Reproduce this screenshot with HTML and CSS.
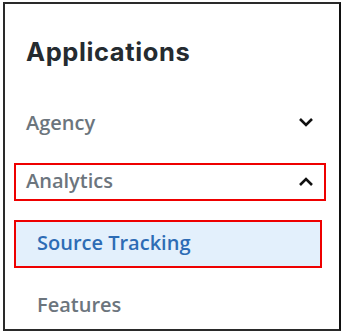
FILE: index.html
```html
<!DOCTYPE html>
<html>
<head>
<meta charset="utf-8">
<link rel="stylesheet" href="styles.css">
</head>
<body>
<div class="panel">
  <h1 class="title">Applications</h1>
  <div class="item">
    <span class="label">Agency</span>
    <svg class="chev" viewBox="0 0 16 10" width="16" height="10"><path d="M2 2 L8 8 L14 2" /></svg>
  </div>
  <div class="item item-open outlined">
    <span class="label">Analytics</span>
    <svg class="chev" viewBox="0 0 16 10" width="16" height="10"><path d="M2 8 L8 2 L14 8" /></svg>
  </div>
  <div class="sub sub-active outlined">
    <span class="label">Source Tracking</span>
  </div>
  <div class="sub">
    <span class="label">Features</span>
  </div>
</div>
</body>
</html>
```

FILE: styles.css
```css
html, body {
  margin: 0;
  padding: 0;
  background: #ffffff;
}
.panel {
  box-sizing: border-box;
  width: 338px;
  height: 329px;
  margin: 2px 0 0 3px;
  border: 2px solid #2a2a2a;
  border-right-color: #111;
  padding: 33px 13px 0 9px;
  overflow: hidden;
  font-family: "Open Sans", "Noto Sans", sans-serif;
}
.title {
  margin: 0 0 36px 0;
  padding-left: 12px;
  font-family: Inter, "Open Sans", sans-serif;
  font-weight: 700;
  font-size: 25.5px;
  line-height: 30px;
  color: #252b30;
  letter-spacing: 0.6px;
}
.item {
  box-sizing: border-box;
  height: 38px;
  display: flex;
  align-items: center;
  justify-content: space-between;
  border: 2px solid transparent;
  padding: 0 10px;
  margin-bottom: 22px;
  color: #6c757d;
  font-size: 20px;
  font-weight: 600;
}
.item-open {
  margin-bottom: 19px;
}
.item-open .label {
  margin-bottom: 3px;
}
.outlined {
  border-color: #ee0000;
}
.chev {
  display: block;
  fill: none;
  stroke: #111;
  stroke-width: 2.6;
  stroke-linecap: butt;
  stroke-linejoin: miter;
}
.sub {
  box-sizing: border-box;
  width: 308px;
  height: 48px;
  display: flex;
  align-items: center;
  border: 2px solid transparent;
  padding: 0 0 0 21px;
  margin-bottom: 12px;
  color: #6c757d;
  font-size: 20px;
  font-weight: 600;
}
.sub-active {
  background: #e3f0fc;
  border-color: #ee0000;
  color: #2d6cb5;
}
.sub-active .label {
  margin-bottom: 4px;
}
```
